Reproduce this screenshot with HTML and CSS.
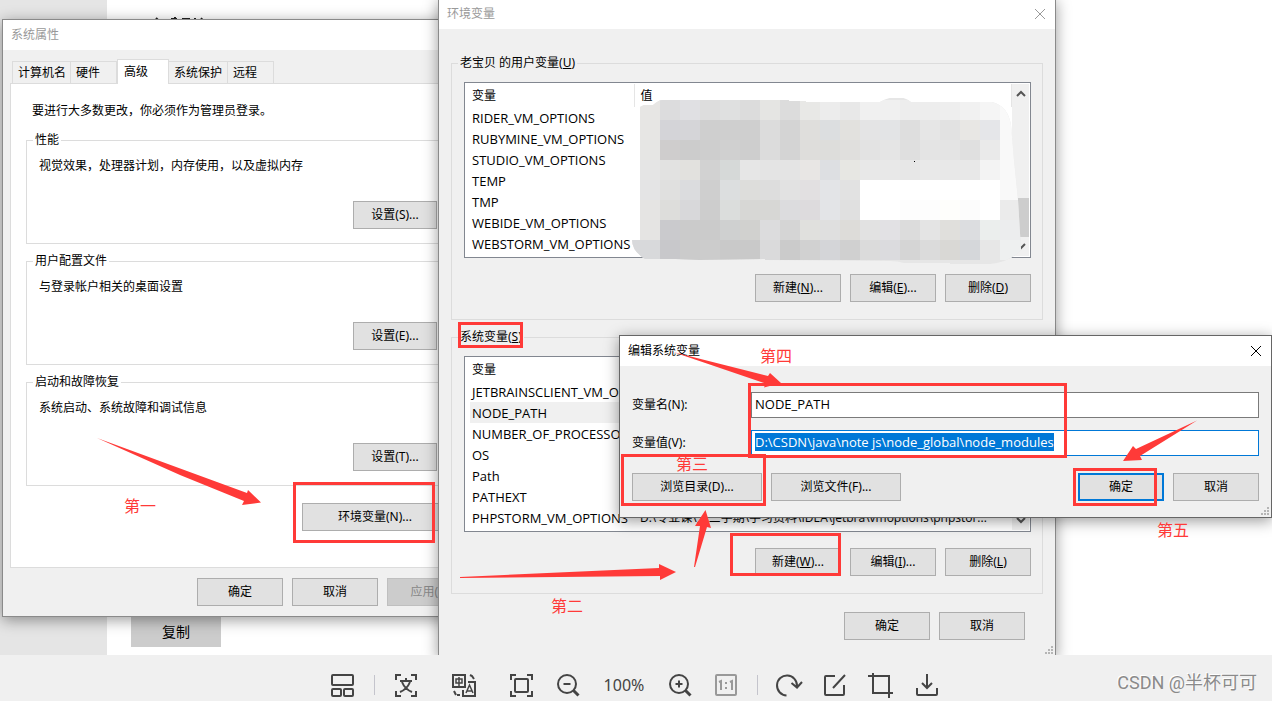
FILE: index.html
```html
<!DOCTYPE html>
<html lang="zh-CN">
<head>
<meta charset="utf-8">
<title>环境变量</title>
<link rel="stylesheet" href="styles.css">
</head>
<body>
<main class="desktop">
  <div class="page-rail"></div>
  <svg class="page-heading" width="60" height="6" viewBox="0 0 60 6" aria-hidden="true"><path d="M6 3l2 2M25 2v4M21 4h6M32 4h8M45 3v2M52 3l-1 2" fill="none" stroke="#222" stroke-width="2"/></svg>
  <button class="page-copy" type="button">复制</button>

  <section class="window window-props" aria-label="系统属性">
    <header class="titlebar">系统属性</header>
    <nav class="tabs">
      <button class="tab tab-wide" type="button">计算机名</button>
      <button class="tab" type="button">硬件</button>
      <button class="tab tab-active" type="button">高级</button>
      <button class="tab tab-wide" type="button">系统保护</button>
      <button class="tab" type="button">远程</button>
    </nav>
    <div class="panel">
      <p class="intro">要进行大多数更改，你必须作为管理员登录。</p>
      <fieldset class="group">
        <legend>性能</legend>
        <p>视觉效果，处理器计划，内存使用，以及虚拟内存</p>
        <button class="btn btn-set" type="button">设置(S)...</button>
      </fieldset>
      <fieldset class="group">
        <legend>用户配置文件</legend>
        <p>与登录帐户相关的桌面设置</p>
        <button class="btn btn-set" type="button">设置(E)...</button>
      </fieldset>
      <fieldset class="group">
        <legend>启动和故障恢复</legend>
        <p>系统启动、系统故障和调试信息</p>
        <button class="btn btn-set" type="button">设置(T)...</button>
      </fieldset>
      <button class="btn btn-env" type="button">环境变量(N)...</button>
    </div>
    <footer class="actions">
      <button class="btn" type="button">确定</button>
      <button class="btn" type="button">取消</button>
      <button class="btn" type="button" disabled>应用(A)</button>
    </footer>
  </section>

  <section class="window window-env" aria-label="环境变量">
    <header class="titlebar">环境变量
      <button class="close" type="button" aria-label="关闭"><svg width="12" height="12" viewBox="0 0 12 12"><path d="M1 1l10 10M11 1L1 11" stroke="currentColor"/></svg></button>
    </header>
    <div class="env-body">
      <fieldset class="group">
        <legend>老宝贝 的用户变量(<u>U</u>)</legend>
        <div class="list">
          <table>
            <thead><tr><th>变量</th><th>值</th></tr></thead>
            <tbody>
              <tr><td>RIDER_VM_OPTIONS</td><td></td></tr>
              <tr><td>RUBYMINE_VM_OPTIONS</td><td></td></tr>
              <tr><td>STUDIO_VM_OPTIONS</td><td></td></tr>
              <tr><td>TEMP</td><td></td></tr>
              <tr><td>TMP</td><td></td></tr>
              <tr><td>WEBIDE_VM_OPTIONS</td><td></td></tr>
              <tr><td>WEBSTORM_VM_OPTIONS</td><td></td></tr>
            </tbody>
          </table>
          <div class="scroll">
            <svg width="10" height="8" viewBox="0 0 10 8"><path d="M1 6l4-4 4 4" fill="none" stroke="#555" stroke-width="2"/></svg>
            <i class="thumb"></i>
            <svg width="10" height="8" viewBox="0 0 10 8"><path d="M1 2l4 4 4-4" fill="none" stroke="#555" stroke-width="2"/></svg>
          </div>
          <svg class="mosaic" width="400" height="168" viewBox="632 98 400 168" aria-hidden="true">
            <clipPath id="blob"><path d="M640 107L644 105H653Q659 100 662 100H789V101H806V102H880Q898 92 911 102H992Q1008 106 1011 125L1014 160L1018 200L1021 250Q1010 262 990 264L950 264V263H904Q898 261 890 261L765 260V259L699 260L675 259H645Q632 251 632 240H640Z"/></clipPath>
            <g id="cells" clip-path="url(#blob)" shape-rendering="crispEdges"><path d="M632 98h400v168H632z" fill="#e6e6e6"/></g>
            <path d="M914 161h1v1h-1z" fill="#000"/>
          </svg>
        </div>
        <div class="row">
          <button class="btn" type="button">新建(<u>N</u>)...</button>
          <button class="btn" type="button">编辑(<u>E</u>)...</button>
          <button class="btn" type="button">删除(<u>D</u>)</button>
        </div>
      </fieldset>
      <fieldset class="group">
        <legend>系统变量(<u>S</u>)</legend>
        <div class="list">
          <table>
            <thead><tr><th>变量</th><th>值</th></tr></thead>
            <tbody>
              <tr><td>JETBRAINSCLIENT_VM_O...</td><td></td></tr>
              <tr class="selected"><td>NODE_PATH</td><td></td></tr>
              <tr><td>NUMBER_OF_PROCESSORS</td><td></td></tr>
              <tr><td>OS</td><td></td></tr>
              <tr><td>Path</td><td></td></tr>
              <tr><td>PATHEXT</td><td></td></tr>
              <tr><td>PHPSTORM_VM_OPTIONS</td><td>D:\专业课\大三学期\学习资料\IDEA\jetbra\vmoptions\phpstor...</td></tr>
            </tbody>
          </table>
          <div class="scroll">
            <svg width="10" height="8" viewBox="0 0 10 8"><path d="M1 6l4-4 4 4" fill="none" stroke="#555" stroke-width="2"/></svg>
            <i class="thumb"></i>
            <svg width="10" height="8" viewBox="0 0 10 8"><path d="M1 2l4 4 4-4" fill="none" stroke="#555" stroke-width="2"/></svg>
          </div>
        </div>
        <div class="row">
          <button class="btn" type="button">新建(<u>W</u>)...</button>
          <button class="btn" type="button">编辑(<u>I</u>)...</button>
          <button class="btn" type="button">删除(<u>L</u>)</button>
        </div>
      </fieldset>
      <footer class="row env-footer">
        <button class="btn" type="button">确定</button>
        <button class="btn" type="button">取消</button>
      </footer>
    </div>
    <svg class="grip" width="9" height="9" viewBox="0 0 9 9" aria-hidden="true"><path d="M7 0h2v2H7zM7 3h2v2H7zM4 3h2v2H4zM7 6h2v2H7zM4 6h2v2H4zM1 6h2v2H1z" fill="#b5b5b5"/></svg>
  </section>

  <section class="window window-edit" aria-label="编辑系统变量">
    <header class="titlebar">编辑系统变量
      <button class="close" type="button" aria-label="关闭"><svg width="12" height="12" viewBox="0 0 12 12"><path d="M1 1l10 10M11 1L1 11" stroke="currentColor"/></svg></button>
    </header>
    <form class="edit-form">
      <div class="field"><label for="var-name">变量名(N):</label><input id="var-name" type="text" value="NODE_PATH"></div>
      <div class="field"><label for="var-value">变量值(V):</label><input id="var-value" type="text" value="D:\CSDN\java\note js\node_global\node_modules"></div>
      <div class="edit-actions">
        <button class="btn btn-browse" type="button">浏览目录(D)...</button>
        <button class="btn btn-browse" type="button">浏览文件(F)...</button>
        <button class="btn btn-default" type="button">确定</button>
        <button class="btn" type="button">取消</button>
      </div>
    </form>
    <svg class="grip" width="9" height="9" viewBox="0 0 9 9" aria-hidden="true"><path d="M7 0h2v2H7zM7 3h2v2H7zM4 3h2v2H4zM7 6h2v2H7zM4 6h2v2H4zM1 6h2v2H1z" fill="#b5b5b5"/></svg>
  </section>

  <svg class="notes" width="1272" height="655" viewBox="0 0 1272 655">
    <g fill="none" stroke="#ff3a38" stroke-width="3">
      <rect x="294.500" y="483.500" width="139" height="58"/>
      <rect x="459.500" y="323.500" width="62" height="23"/>
      <rect x="622.500" y="455.500" width="142" height="49"/>
      <rect x="749.500" y="384.500" width="316" height="72"/>
      <rect x="1074.500" y="469.500" width="81" height="35"/>
      <rect x="731.500" y="534.500" width="108" height="40"/>
    </g>
    <g fill="#ff3a38">
      <path d="M97 438L247 493L248 490L261 502.500L242 505L244 501L180 475Z"/>
      <path d="M460 577L659 568V564L676 572L660 580V576L460 578Z"/>
      <path d="M694 567L700 526L695 526L705.500 510L711 528L707 527L695 567Z"/>
      <path d="M673 352L768 376L770 373L781 383L764 387.500L765.500 383.500Z"/>
      <path d="M1197 420.500L1136 449L1133 446L1123 461L1142 460L1140 456Z"/>
      <text x="124" y="512">第一</text>
      <text x="551" y="612">第二</text>
      <text x="676" y="470">第三</text>
      <text x="760" y="362">第四</text>
      <text x="1157" y="536">第五</text>
    </g>
  </svg>
</main>

<footer class="viewer">
  <button type="button" aria-label="缩略图"><svg width="28" height="28" viewBox="0 0 28 28"><rect x="3" y="4" width="21" height="10" rx="1"/><rect x="3" y="18" width="9" height="7" rx="1"/><rect x="15" y="18" width="9" height="7" rx="1"/></svg></button>
  <i class="sep"></i>
  <button class="wide" type="button" aria-label="提取文字"><svg width="28" height="28" viewBox="0 0 28 28"><path d="M4 9V4h5M19 4h5v5M24 20v5h-5M9 25H4v-5M8 10h12M14 7v3M18 11c-2 5-5 8-10 10M10 11c2 5 5 8 10 10"/></svg></button>
  <button class="wide" type="button" aria-label="翻译"><svg width="28" height="28" viewBox="0 0 28 28"><path d="M3 4h12v12H3zM18 11h7v14H13v-6"/><path d="M6 8h6v4H6zM9 6v9M16 22l3.500-8 3.500 8M17 20h5" stroke-width="1.500"/><path d="M20 4l2 1 2 3M4 20l2 4M7 24h3"/></svg></button>
  <button type="button" aria-label="适应窗口"><svg width="28" height="28" viewBox="0 0 28 28"><path d="M3 9V4h5M19 4h5v5M24 20v5h-5M8 25H3v-5"/><rect x="7" y="8" width="13" height="13" rx="1"/></svg></button>
  <button type="button" aria-label="缩小"><svg width="28" height="28" viewBox="0 0 28 28"><circle cx="13" cy="13" r="9"/><path d="M9.500 13h7"/><path d="M19.500 19.500l5 5" stroke-width="3"/></svg></button>
  <span class="zoom">100%</span>
  <button type="button" aria-label="放大"><svg width="28" height="28" viewBox="0 0 28 28"><circle cx="13" cy="13" r="9"/><path d="M9.500 13h7M13 9.500v7"/><path d="M19.500 19.500l5 5" stroke-width="3"/></svg></button>
  <button class="faded" type="button" aria-label="原始大小"><svg width="28" height="28" viewBox="0 0 28 28"><rect x="4" y="4" width="20" height="20" rx="1"/><path d="M7 11l2-1v9M18 11l2-1v9M14 11v2M14 16v2"/></svg></button>
  <i class="sep"></i>
  <button type="button" aria-label="旋转"><svg width="28" height="28" viewBox="0 0 28 28"><path d="M11.500 24.500A10 10 0 1 1 22 15M16.500 12l5.500 4.500 5-5.500"/></svg></button>
  <button type="button" aria-label="编辑"><svg width="28" height="28" viewBox="0 0 28 28"><path d="M14 5H5a1 1 0 0 0-1 1v17a1 1 0 0 0 1 1h17a1 1 0 0 0 1-1v-9M12 17L24 4"/></svg></button>
  <button type="button" aria-label="裁剪"><svg width="28" height="28" viewBox="0 0 28 28"><path d="M6 2v20h20M1 5h21v22"/></svg></button>
  <button type="button" aria-label="下载"><svg width="28" height="28" viewBox="0 0 28 28"><path d="M14 3v13M9 12l5 5 5-5M4 17v6a1 1 0 0 0 1 1h18a1 1 0 0 0 1-1v-6"/></svg></button>
  <span class="watermark">CSDN @半杯可可</span>
</footer>
<script src="script.js"></script>
</body>
</html>
```

FILE: styles.css
```css
* { box-sizing: border-box; }

body {
  margin: 0;
  min-height: 100vh;
  display: flex;
  flex-direction: column;
  background: #f0f0f0;
  color: #000;
  font: 12px/16px "Noto Sans", "Noto Sans CJK SC", sans-serif;
}

button, input { font: inherit; color: inherit; }
p { margin: 0; }

.desktop {
  position: relative;
  flex: 1;
  display: flex;
  background: #fff;
  overflow: hidden;
}
.page-rail { width: 107px; background: #e5e5e5; }
.page-heading { position: absolute; left: 150px; top: 15px; }
.page-copy {
  position: absolute;
  left: 131px;
  top: 616px;
  width: 90px;
  height: 31px;
  border: 0;
  background: #ccc;
  font-size: 14px;
}

.window {
  position: absolute;
  background: #f0f0f0;
  border: 1px solid #8a8a8a;
  box-shadow: 0 3px 14px rgba(0, 0, 0, .4);
}
.window-props { left: 2px; top: 19px; width: 480px; }
.window-env { left: 438px; top: -2px; width: 618px; }
.window-edit { left: 619px; top: 335px; width: 653px; border-color: #666; }

.titlebar {
  display: flex;
  align-items: center;
  justify-content: space-between;
  height: 30px;
  padding: 0 8px;
  background: #fff;
  color: #999;
}
.window-edit .titlebar { color: #000; }
.close {
  display: flex;
  padding: 1px;
  border: 0;
  background: none;
}

.btn {
  width: 86px;
  height: 28px;
  padding: 0;
  border: 1px solid #adadad;
  background: #e1e1e1;
  white-space: nowrap;
}
.btn:disabled { background: #ccc; border-color: #bfbfbf; color: #888; }
.btn-set { display: block; width: 84px; margin: 27px 8px 0 auto; }
.btn-env { display: block; width: 146px; margin: 17px 10px 0 auto; }
.btn-browse { width: 130px; }
.btn-default { border: 2px solid #0078d7; margin-left: auto; }

.tabs {
  display: flex;
  align-items: flex-end;
  padding: 9px 9px 0;
}
.tab {
  width: 46px;
  height: 22px;
  padding: 0 5px;
  border: 1px solid #dcdcdc;
  border-width: 1px 1px 0 0;
  background: #f0f0f0;
  text-align: left;
  white-space: nowrap;
}
.tab:first-child { border-left-width: 1px; }
.tab-wide { width: 59px; }
.tab-active {
  position: relative;
  z-index: 1;
  width: 52px;
  height: 25px;
  padding: 0 6px;
  margin-bottom: -1px;
  background: #fff;
  border-left-width: 1px;
}
.panel {
  margin: 0 7px;
  padding: 19px 15px 36px;
  border: 1px solid #dcdcdc;
  background: #fff;
}
.intro { margin: 0 0 13px 6px; }

.group {
  min-width: 0;
  margin: 0 0 9px;
  padding: 10px 12px 14px;
  border: 1px solid #dcdcdc;
}
.group legend { margin-left: -6px; padding: 0 2px; }
.actions {
  display: flex;
  justify-content: flex-end;
  gap: 9px;
  padding: 10px 8px;
}

.env-body { padding: 26px 12px 16px; }
.env-body .group { padding: 11px 11px 17px 12px; }
.row {
  display: flex;
  justify-content: flex-end;
  gap: 9px;
  margin-top: 16px;
}
.env-footer { margin-top: 18px; padding: 0 18px 0 0; }

.list {
  position: relative;
  display: flex;
  height: 176px;
  padding: 1px 1px 1px 5px;
  border: 1px solid #828790;
  background: #fff;
}
.list table {
  flex: 1;
  width: 100%;
  min-width: 0;
  table-layout: fixed;
  border-collapse: collapse;
  align-self: flex-start;
}
.list th {
  height: 23px;
  padding: 0 2px;
  border-right: 1px solid #e5e5e5;
  font-weight: 400;
  text-align: left;
}
.list th:first-child { width: 164px; }
.list td {
  height: 21px;
  padding: 0 2px;
  font-family: "Open Sans", "Noto Sans CJK SC", sans-serif;
  font-size: 13px;
  white-space: nowrap;
}
.list td + td { padding-left: 6px; font-size: 12px; }
.list th + th { padding-left: 6px; }
.selected { background: #f0f0f0; }
.scroll {
  display: flex;
  flex: none;
  flex-direction: column;
  align-items: center;
  width: 17px;
  padding: 6px 0;
  background: #f0f0f0;
}
.thumb {
  width: 17px;
  height: 39px;
  margin: auto 0 5px;
  background: #cdcdcd;
}
.mosaic { position: absolute; left: 167px; top: 15px; }
.grip { position: absolute; right: 2px; bottom: 1px; }

.edit-form {
  display: flex;
  flex-direction: column;
  gap: 12px;
  padding: 26px 12px 16px;
}
.field {
  display: grid;
  grid-template-columns: 119px 1fr;
  align-items: center;
}
.field input {
  height: 26px;
  min-width: 0;
  padding: 0 3px 3px;
  border: 1px solid #7a7a7a;
  background: #fff;
  font-family: "Open Sans", sans-serif;
  font-size: 13px;
  outline: 0;
}
#var-value { border-color: #0078d7; }
.field input::selection { background: #0078d7; color: #fff; }
.edit-actions { display: flex; gap: 9px; margin-top: 5px; }

.notes { position: absolute; left: 0; top: 0; pointer-events: none; }
.notes text { font-size: 16px; }

.viewer {
  position: relative;
  display: flex;
  justify-content: center;
  align-items: center;
  gap: 18px;
  padding: 16px 2px 2px 0;
  color: #444;
}
.viewer button {
  display: flex;
  padding: 0;
  border: 0;
  background: none;
}
.viewer .wide { margin-right: 12px; }
.viewer svg {
  fill: none;
  stroke: #444;
  stroke-width: 2;
}
.viewer .faded svg { stroke: #999; }
.sep { width: 1px; height: 20px; margin: 0 -1px; background: #c4c4cc; }
.zoom { width: 48px; text-align: center; font-size: 16px; }
.watermark {
  position: absolute;
  right: 15px;
  top: 16px;
  font: 18px/24px Roboto, "Noto Sans CJK SC", sans-serif;
  color: #8a8a8a;
  text-shadow: -1px -1px 0 #fff;
}
```

FILE: script.js
```
const rows = [
  "e7e6e4 dcdcdd e0e0e3 dddddd dfe0e0 dcdcdc e5e5e3 dcdcdc e8e8e6 ececec e8e8e8 f0f0f0 f0f0f0 ededed ededed eeeeee f1f1f1 f5f5f5 f9f9f9 f9f9f9",
  "e7e6e4 d4d4d8 d5d5d8 cfcfcf cfcfcf cfcfcf dcdcdc d4d4d4 dfdedc dcdee0 e2e1de e4e4e5 e3e4e6 dedede e6e6e6 e2e2e2 e8e7e4 e5e6e9 f9f9f9 f9f9f9",
  "e6e6e4 cfcdcd cccccc cecece d0d0d0 cecece dcdcdc d4d4d4 dedddb dddddb e0dfdd e3e3e3 e5e5e5 dfdfdf e4e4e4 e4e4e4 e0e0e0 eaeaea f9f9f9 f9f9f9",
  "e5e5e5 e2e2e1 e2e1de d2d2d2 d6d9d8 e6e6e6 e4e4e4 e4e4e4 e8e6e4 dddfe2 e7e7e3 e8e8e8 e8e8e8 e7e7e7 e9e9e9 e8e8e8 e8e8e8 f3f3f3 f9f9f9 f9f9f9",
  "e4e4e5 e0e0df dbdcde cfcfcf dcdedf dddddb dddddd e2e2e2 e2e0e1 e3e4e7 e2e2e2 ffffff ffffff ffffff ffffff ffffff ffffff ffffff f9f9f9 f9f9f9",
  "e5e4e3 dddddb d8d8da cdcdcd dbdddc d7d7d5 d7d7d5 dcdcde dddbdd e3e4e7 e0e0e0 ffffff ffffff fdfdfd fdfdfd fefefb fcfcfc ffffff ebebeb ebebeb",
  "e5e4e3 cacacd cbcbcb cbcbcb cfd0d0 d1d1cf dcdcdd d5d5d5 e0e0dd dfdfdf dddcd9 e2e2e2 e2e1e4 dcdcdc e4e4e4 e0dfdc dcdde0 ebeeed ecedee ecedee",
  "d8d9db c8c8cb cbcbcb cccccc c9c9c9 c9c9c9 dadadb cbcbcb d1d1d1 d4d5d8 d0d0d0 dbdbdb dbdbde d5d5d5 dbdbdb d9d8d5 d5d7da e7e7e7 eef0f0 eef0f0"
];
const cells = document.getElementById("cells");
rows.forEach((row, r) => row.split(" ").forEach((color, c) => {
  const rect = document.createElementNS("http://www.w3.org/2000/svg", "rect");
  const x = c === 0 ? 632 : 640 + c * 20;
  rect.setAttribute("x", x);
  rect.setAttribute("y", 100 + r * 20);
  rect.setAttribute("width", c === 0 ? 28 : 20);
  rect.setAttribute("height", 20);
  rect.setAttribute("fill", "#" + color);
  cells.append(rect);
}));
const field = document.getElementById("var-value");
field.focus();
field.select();
```
